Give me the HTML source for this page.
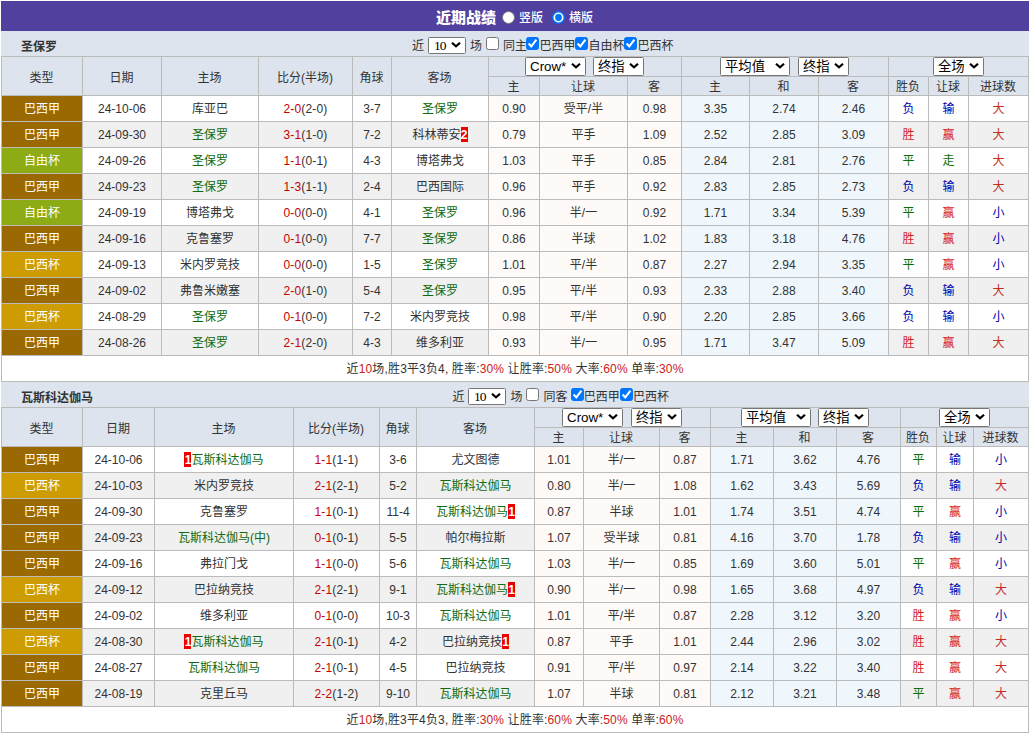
<!DOCTYPE html>
<html lang="zh-CN"><head><meta charset="utf-8"><title>近期战绩</title>
<style>
html,body{margin:0;padding:0;background:#fff;}
body{width:1030px;height:735px;overflow:hidden;position:relative;font-family:"Liberation Sans","Noto Sans CJK SC",sans-serif;font-size:12px;color:#333;}
#wrap{position:absolute;left:1px;top:1px;width:1028px;}
.title{height:30px;background:#51409e;color:#fff;font-size:12px;position:relative;}
.title span,.title b{position:absolute;white-space:nowrap;}
.title b{font-size:15px;left:435px;top:0;line-height:33px;font-weight:900;}
.title .rl{font-weight:500;top:0;line-height:35px;}
.bar{height:25px;background:#dde4ee;position:relative;}
.bar>span{position:absolute;white-space:nowrap;top:0;line-height:30px;}
.bar .tname{left:20px;font-weight:bold;color:#333;line-height:32px;}
.bar .sel{top:6px;height:17px;line-height:15px;}
.bar .cb{top:6px;}
table.grid{border-collapse:collapse;table-layout:fixed;width:1028px;}
table.grid th,table.grid td{border:1px solid #bbb;padding:0;text-align:center;font-weight:normal;overflow:hidden;white-space:nowrap;line-height:16px;}
tr.h1 th{height:35px;padding:3px 1px 0 0;background:#dde4ee;}
tr.h1 th[colspan]{height:19px;padding:0;line-height:19px;font-size:0;}
#t1 tr.h1 th.p1{padding-right:1px;}
tr.h2 th{height:16px;padding:2px 1px 0 0;background:#dde4ee;}
tbody td{height:25px;}
tr.ro td{background:#fff;}
tr.re td{background:#f0f0f0;}
tr.ro td.ah,tr.re td.ah{background:#fefaf7;}
tr.ro td.eu,tr.re td.eu{background:#eff7fc;}
td.lg{color:#fff;font-weight:500;padding-right:2px;}
tr td.l1{background:#9b6902;}
tr td.l2{background:#8dab14;}
tr td.l3{background:#cd9c02;}
.tg{color:#0f6b0f;}
.sr{color:#c40000;}
td.r{color:#d61c1c;}
tr.sum .r{color:#cc2020;}
.b{color:#00a;}
.gn{color:#0a6e0a;}
.bg{color:#c52d1c;}
td.tm{padding-right:4px;}
#t2 .w60{margin-left:-1px}#t2 .ml7{margin-left:8px}#t2 .ml{margin-left:7px}#t2 tr.h1 th.p2{padding-right:1px}
.rc{display:inline-block;background:#e00;color:#fff;font-weight:bold;width:7px;text-align:center;height:15px;line-height:17px;vertical-align:top;margin-top:0;}
tr.sum td{background:#fff;height:25px;letter-spacing:0.15px;}
.sel{display:inline-block;box-sizing:border-box;height:19px;border:1px solid #767676;border-radius:1.5px;background:#fff;color:#000;vertical-align:top;text-align:left;padding-left:4px;line-height:18px;position:relative;font-size:13.333px;}
.sel svg{position:absolute;right:4px;top:4px;}
.bar .sel svg{top:3px;}
.w60{width:61px}.w50{width:51px}.w69{width:70px}.w37{width:38px}
.ml{margin-left:8px}.ml7{margin-left:7px}
.s10{font-family:"Liberation Serif",serif;font-size:13.5px;letter-spacing:-1px;padding-left:5px;line-height:16px;}
.cb{display:inline-block;width:13px;height:13px;box-sizing:border-box;border:1px solid #767676;border-radius:2.5px;background:#fff;}
.cb.on{background:#0075ff;border-color:#0075ff;}
.cb svg{position:absolute;left:-1px;top:-1px;}
.rad{width:13px;height:13px;box-sizing:border-box;border-radius:50%;background:#fff;border:1px solid #767676;top:10px;}
.rad.on{border:0;background:none;}
.rad.on svg{position:absolute;left:0;top:0;}
td.sc{letter-spacing:0.15px;}
td.cn,td.b,td.r,td.gn,td.bg{padding-right:1px;}
</style></head><body><div id="wrap">

<div class="title"><b>近期战绩</b><span class="rad" style="left:501px"></span><span class="rl" style="left:518px">竖版</span><span class="rad on" style="left:551px"><svg width="13" height="13" viewBox="0 0 13 13"><circle cx="6.5" cy="6.5" r="5.75" fill="#fff" stroke="#0075ff" stroke-width="1.5"/><circle cx="6.5" cy="6.5" r="3.4" fill="#0075ff"/></svg></span><span class="rl" style="left:568px">横版</span></div>
<div class="bar" id="bar1"><span class="tname">圣保罗</span><span style="left:411px">近</span><span class="sel w37 s10" style="left:427px">10<svg width="10" height="8" viewBox="0 0 10 8"><path d="M1 1.7 L5 5.3 L9 1.7" stroke="#000" stroke-width="2.2" fill="none"/></svg></span><span style="left:469px">场</span><span class="cb" style="left:485px"></span><span style="left:502px">同主</span><span class="cb on" style="left:525px"><svg width="13" height="13" viewBox="0 0 13 13"><path d="M2.6 6.6 L5.3 9.4 L10.4 2.7" stroke="#fff" stroke-width="2.1" fill="none"/></svg></span><span style="left:538.6px">巴西甲</span><span class="cb on" style="left:574px"><svg width="13" height="13" viewBox="0 0 13 13"><path d="M2.6 6.6 L5.3 9.4 L10.4 2.7" stroke="#fff" stroke-width="2.1" fill="none"/></svg></span><span style="left:587.6px">自由杯</span><span class="cb on" style="left:623px"><svg width="13" height="13" viewBox="0 0 13 13"><path d="M2.6 6.6 L5.3 9.4 L10.4 2.7" stroke="#fff" stroke-width="2.1" fill="none"/></svg></span><span style="left:636.6px">巴西杯</span></div>
<table class="grid" id="t1">
<colgroup><col style="width:81px"><col style="width:79px"><col style="width:97px"><col style="width:94px"><col style="width:39px"><col style="width:97px"><col style="width:51px"><col style="width:88px"><col style="width:54px"><col style="width:68px"><col style="width:69px"><col style="width:70px"><col style="width:40px"><col style="width:40px"><col style="width:60px"></colgroup>
<thead>
<tr class="h1"><th rowspan="2">类型</th><th rowspan="2">日期</th><th rowspan="2">主场</th><th rowspan="2">比分(半场)</th><th rowspan="2">角球</th><th rowspan="2">客场</th><th colspan="3" class="p1"><span class="sel w60">Crow*<svg width="10" height="8" viewBox="0 0 10 8"><path d="M1 1.7 L5 5.3 L9 1.7" stroke="#000" stroke-width="2.2" fill="none"/></svg></span><span class="sel w50 ml7">终指<svg width="10" height="8" viewBox="0 0 10 8"><path d="M1 1.7 L5 5.3 L9 1.7" stroke="#000" stroke-width="2.2" fill="none"/></svg></span></th><th colspan="3" class="p1 p2"><span class="sel w69">平均值<svg width="10" height="8" viewBox="0 0 10 8"><path d="M1 1.7 L5 5.3 L9 1.7" stroke="#000" stroke-width="2.2" fill="none"/></svg></span><span class="sel w50 ml">终指<svg width="10" height="8" viewBox="0 0 10 8"><path d="M1 1.7 L5 5.3 L9 1.7" stroke="#000" stroke-width="2.2" fill="none"/></svg></span></th><th colspan="3"><span class="sel w50">全场<svg width="10" height="8" viewBox="0 0 10 8"><path d="M1 1.7 L5 5.3 L9 1.7" stroke="#000" stroke-width="2.2" fill="none"/></svg></span></th></tr>
<tr class="h2"><th>主</th><th>让球</th><th>客</th><th>主</th><th>和</th><th>客</th><th>胜负</th><th>让球</th><th>进球数</th></tr>
</thead><tbody>
<tr class="ro"><td class="lg l1">巴西甲</td><td>24-10-06</td><td class="tm"><span class="tn">库亚巴</span></td><td class="sc"><span class="sr">2-0</span>(2-0)</td><td>3-7</td><td class="tm"><span class="tg">圣保罗</span></td><td class="ah">0.90</td><td class="ah cn">受平/半</td><td class="ah">0.98</td><td class="eu">3.35</td><td class="eu">2.74</td><td class="eu">2.46</td><td class="b">负</td><td class="b">输</td><td class="bg">大</td></tr>
<tr class="re"><td class="lg l1">巴西甲</td><td>24-09-30</td><td class="tm"><span class="tg">圣保罗</span></td><td class="sc"><span class="sr">3-1</span>(1-0)</td><td>7-2</td><td class="tm"><span class="tn">科林蒂安</span><span class="rc">2</span></td><td class="ah">0.79</td><td class="ah cn">平手</td><td class="ah">1.09</td><td class="eu">2.52</td><td class="eu">2.85</td><td class="eu">3.09</td><td class="r">胜</td><td class="r">赢</td><td class="bg">大</td></tr>
<tr class="ro"><td class="lg l2">自由杯</td><td>24-09-26</td><td class="tm"><span class="tg">圣保罗</span></td><td class="sc"><span class="sr">1-1</span>(0-1)</td><td>4-3</td><td class="tm"><span class="tn">博塔弗戈</span></td><td class="ah">1.03</td><td class="ah cn">平手</td><td class="ah">0.85</td><td class="eu">2.84</td><td class="eu">2.81</td><td class="eu">2.76</td><td class="gn">平</td><td class="gn">走</td><td class="bg">大</td></tr>
<tr class="re"><td class="lg l1">巴西甲</td><td>24-09-23</td><td class="tm"><span class="tg">圣保罗</span></td><td class="sc"><span class="sr">1-3</span>(1-1)</td><td>2-4</td><td class="tm"><span class="tn">巴西国际</span></td><td class="ah">0.96</td><td class="ah cn">平手</td><td class="ah">0.92</td><td class="eu">2.83</td><td class="eu">2.85</td><td class="eu">2.73</td><td class="b">负</td><td class="b">输</td><td class="bg">大</td></tr>
<tr class="ro"><td class="lg l2">自由杯</td><td>24-09-19</td><td class="tm"><span class="tn">博塔弗戈</span></td><td class="sc"><span class="sr">0-0</span>(0-0)</td><td>4-1</td><td class="tm"><span class="tg">圣保罗</span></td><td class="ah">0.96</td><td class="ah cn">半/一</td><td class="ah">0.92</td><td class="eu">1.71</td><td class="eu">3.34</td><td class="eu">5.39</td><td class="gn">平</td><td class="r">赢</td><td class="b">小</td></tr>
<tr class="re"><td class="lg l1">巴西甲</td><td>24-09-16</td><td class="tm"><span class="tn">克鲁塞罗</span></td><td class="sc"><span class="sr">0-1</span>(0-0)</td><td>7-7</td><td class="tm"><span class="tg">圣保罗</span></td><td class="ah">0.86</td><td class="ah cn">半球</td><td class="ah">1.02</td><td class="eu">1.83</td><td class="eu">3.18</td><td class="eu">4.76</td><td class="r">胜</td><td class="r">赢</td><td class="b">小</td></tr>
<tr class="ro"><td class="lg l3">巴西杯</td><td>24-09-13</td><td class="tm"><span class="tn">米内罗竞技</span></td><td class="sc"><span class="sr">0-0</span>(0-0)</td><td>1-5</td><td class="tm"><span class="tg">圣保罗</span></td><td class="ah">1.01</td><td class="ah cn">平/半</td><td class="ah">0.87</td><td class="eu">2.27</td><td class="eu">2.94</td><td class="eu">3.35</td><td class="gn">平</td><td class="r">赢</td><td class="b">小</td></tr>
<tr class="re"><td class="lg l1">巴西甲</td><td>24-09-02</td><td class="tm"><span class="tn">弗鲁米嫩塞</span></td><td class="sc"><span class="sr">2-0</span>(1-0)</td><td>5-4</td><td class="tm"><span class="tg">圣保罗</span></td><td class="ah">0.95</td><td class="ah cn">平/半</td><td class="ah">0.93</td><td class="eu">2.33</td><td class="eu">2.88</td><td class="eu">3.40</td><td class="b">负</td><td class="b">输</td><td class="bg">大</td></tr>
<tr class="ro"><td class="lg l3">巴西杯</td><td>24-08-29</td><td class="tm"><span class="tg">圣保罗</span></td><td class="sc"><span class="sr">0-1</span>(0-0)</td><td>7-2</td><td class="tm"><span class="tn">米内罗竞技</span></td><td class="ah">0.98</td><td class="ah cn">平/半</td><td class="ah">0.90</td><td class="eu">2.20</td><td class="eu">2.85</td><td class="eu">3.66</td><td class="b">负</td><td class="b">输</td><td class="b">小</td></tr>
<tr class="re"><td class="lg l1">巴西甲</td><td>24-08-26</td><td class="tm"><span class="tg">圣保罗</span></td><td class="sc"><span class="sr">2-1</span>(2-0)</td><td>4-3</td><td class="tm"><span class="tn">维多利亚</span></td><td class="ah">0.93</td><td class="ah cn">半/一</td><td class="ah">0.95</td><td class="eu">1.71</td><td class="eu">3.47</td><td class="eu">5.09</td><td class="r">胜</td><td class="r">赢</td><td class="bg">大</td></tr>
<tr class="sum"><td colspan="15">近<span class="r">10</span>场,胜3平3负4, 胜率:<span class="r">30%</span> 让胜率:<span class="r">50%</span> 大率:<span class="r">60%</span> 单率:<span class="r">30%</span></td></tr>
</tbody></table>
<div class="bar" id="bar2"><span class="tname">瓦斯科达伽马</span><span style="left:451.6px">近</span><span class="sel w37 s10" style="left:467px">10<svg width="10" height="8" viewBox="0 0 10 8"><path d="M1 1.7 L5 5.3 L9 1.7" stroke="#000" stroke-width="2.2" fill="none"/></svg></span><span style="left:509.6px">场</span><span class="cb" style="left:525px"></span><span style="left:542.6px">同客</span><span class="cb on" style="left:570px"><svg width="13" height="13" viewBox="0 0 13 13"><path d="M2.6 6.6 L5.3 9.4 L10.4 2.7" stroke="#fff" stroke-width="2.1" fill="none"/></svg></span><span style="left:582.8px">巴西甲</span><span class="cb on" style="left:619px"><svg width="13" height="13" viewBox="0 0 13 13"><path d="M2.6 6.6 L5.3 9.4 L10.4 2.7" stroke="#fff" stroke-width="2.1" fill="none"/></svg></span><span style="left:632px">巴西杯</span></div>
<table class="grid" id="t2">
<colgroup><col style="width:81px"><col style="width:72px"><col style="width:139px"><col style="width:86px"><col style="width:37px"><col style="width:118px"><col style="width:49px"><col style="width:76px"><col style="width:51px"><col style="width:63px"><col style="width:63px"><col style="width:64px"><col style="width:36px"><col style="width:37px"><col style="width:55px"></colgroup>
<thead>
<tr class="h1"><th rowspan="2">类型</th><th rowspan="2">日期</th><th rowspan="2">主场</th><th rowspan="2">比分(半场)</th><th rowspan="2">角球</th><th rowspan="2">客场</th><th colspan="3" class="p1"><span class="sel w60">Crow*<svg width="10" height="8" viewBox="0 0 10 8"><path d="M1 1.7 L5 5.3 L9 1.7" stroke="#000" stroke-width="2.2" fill="none"/></svg></span><span class="sel w50 ml7">终指<svg width="10" height="8" viewBox="0 0 10 8"><path d="M1 1.7 L5 5.3 L9 1.7" stroke="#000" stroke-width="2.2" fill="none"/></svg></span></th><th colspan="3" class="p1 p2"><span class="sel w69">平均值<svg width="10" height="8" viewBox="0 0 10 8"><path d="M1 1.7 L5 5.3 L9 1.7" stroke="#000" stroke-width="2.2" fill="none"/></svg></span><span class="sel w50 ml">终指<svg width="10" height="8" viewBox="0 0 10 8"><path d="M1 1.7 L5 5.3 L9 1.7" stroke="#000" stroke-width="2.2" fill="none"/></svg></span></th><th colspan="3"><span class="sel w50">全场<svg width="10" height="8" viewBox="0 0 10 8"><path d="M1 1.7 L5 5.3 L9 1.7" stroke="#000" stroke-width="2.2" fill="none"/></svg></span></th></tr>
<tr class="h2"><th>主</th><th>让球</th><th>客</th><th>主</th><th>和</th><th>客</th><th>胜负</th><th>让球</th><th>进球数</th></tr>
</thead><tbody>
<tr class="ro"><td class="lg l1">巴西甲</td><td>24-10-06</td><td class="tm"><span class="rc">1</span><span class="tg">瓦斯科达伽马</span></td><td class="sc"><span class="sr">1-1</span>(1-1)</td><td>3-6</td><td class="tm"><span class="tn">尤文图德</span></td><td class="ah">1.01</td><td class="ah cn">半/一</td><td class="ah">0.87</td><td class="eu">1.71</td><td class="eu">3.62</td><td class="eu">4.76</td><td class="gn">平</td><td class="b">输</td><td class="b">小</td></tr>
<tr class="re"><td class="lg l3">巴西杯</td><td>24-10-03</td><td class="tm"><span class="tn">米内罗竞技</span></td><td class="sc"><span class="sr">2-1</span>(2-1)</td><td>5-2</td><td class="tm"><span class="tg">瓦斯科达伽马</span></td><td class="ah">0.80</td><td class="ah cn">半/一</td><td class="ah">1.08</td><td class="eu">1.62</td><td class="eu">3.43</td><td class="eu">5.69</td><td class="b">负</td><td class="b">输</td><td class="bg">大</td></tr>
<tr class="ro"><td class="lg l1">巴西甲</td><td>24-09-30</td><td class="tm"><span class="tn">克鲁塞罗</span></td><td class="sc"><span class="sr">1-1</span>(0-1)</td><td>11-4</td><td class="tm"><span class="tg">瓦斯科达伽马</span><span class="rc">1</span></td><td class="ah">0.87</td><td class="ah cn">半球</td><td class="ah">1.01</td><td class="eu">1.74</td><td class="eu">3.51</td><td class="eu">4.74</td><td class="gn">平</td><td class="r">赢</td><td class="b">小</td></tr>
<tr class="re"><td class="lg l1">巴西甲</td><td>24-09-23</td><td class="tm"><span class="tg">瓦斯科达伽马(中)</span></td><td class="sc"><span class="sr">0-1</span>(0-1)</td><td>5-5</td><td class="tm"><span class="tn">帕尔梅拉斯</span></td><td class="ah">1.07</td><td class="ah cn">受半球</td><td class="ah">0.81</td><td class="eu">4.16</td><td class="eu">3.70</td><td class="eu">1.78</td><td class="b">负</td><td class="b">输</td><td class="b">小</td></tr>
<tr class="ro"><td class="lg l1">巴西甲</td><td>24-09-16</td><td class="tm"><span class="tn">弗拉门戈</span></td><td class="sc"><span class="sr">1-1</span>(0-0)</td><td>5-6</td><td class="tm"><span class="tg">瓦斯科达伽马</span></td><td class="ah">1.03</td><td class="ah cn">半/一</td><td class="ah">0.85</td><td class="eu">1.69</td><td class="eu">3.60</td><td class="eu">5.01</td><td class="gn">平</td><td class="r">赢</td><td class="b">小</td></tr>
<tr class="re"><td class="lg l3">巴西杯</td><td>24-09-12</td><td class="tm"><span class="tn">巴拉纳竞技</span></td><td class="sc"><span class="sr">2-1</span>(2-1)</td><td>9-1</td><td class="tm"><span class="tg">瓦斯科达伽马</span><span class="rc">1</span></td><td class="ah">0.90</td><td class="ah cn">半/一</td><td class="ah">0.98</td><td class="eu">1.65</td><td class="eu">3.68</td><td class="eu">4.97</td><td class="b">负</td><td class="b">输</td><td class="bg">大</td></tr>
<tr class="ro"><td class="lg l1">巴西甲</td><td>24-09-02</td><td class="tm"><span class="tn">维多利亚</span></td><td class="sc"><span class="sr">0-1</span>(0-0)</td><td>10-3</td><td class="tm"><span class="tg">瓦斯科达伽马</span></td><td class="ah">1.01</td><td class="ah cn">平/半</td><td class="ah">0.87</td><td class="eu">2.28</td><td class="eu">3.12</td><td class="eu">3.20</td><td class="r">胜</td><td class="r">赢</td><td class="b">小</td></tr>
<tr class="re"><td class="lg l3">巴西杯</td><td>24-08-30</td><td class="tm"><span class="rc">1</span><span class="tg">瓦斯科达伽马</span></td><td class="sc"><span class="sr">2-1</span>(0-1)</td><td>4-2</td><td class="tm"><span class="tn">巴拉纳竞技</span><span class="rc">1</span></td><td class="ah">0.87</td><td class="ah cn">平手</td><td class="ah">1.01</td><td class="eu">2.44</td><td class="eu">2.96</td><td class="eu">3.02</td><td class="r">胜</td><td class="r">赢</td><td class="bg">大</td></tr>
<tr class="ro"><td class="lg l1">巴西甲</td><td>24-08-27</td><td class="tm"><span class="tg">瓦斯科达伽马</span></td><td class="sc"><span class="sr">2-1</span>(0-1)</td><td>4-5</td><td class="tm"><span class="tn">巴拉纳竞技</span></td><td class="ah">0.91</td><td class="ah cn">平/半</td><td class="ah">0.97</td><td class="eu">2.14</td><td class="eu">3.22</td><td class="eu">3.40</td><td class="r">胜</td><td class="r">赢</td><td class="bg">大</td></tr>
<tr class="re"><td class="lg l1">巴西甲</td><td>24-08-19</td><td class="tm"><span class="tn">克里丘马</span></td><td class="sc"><span class="sr">2-2</span>(1-2)</td><td>9-10</td><td class="tm"><span class="tg">瓦斯科达伽马</span></td><td class="ah">1.07</td><td class="ah cn">半球</td><td class="ah">0.81</td><td class="eu">2.12</td><td class="eu">3.21</td><td class="eu">3.48</td><td class="gn">平</td><td class="r">赢</td><td class="bg">大</td></tr>
<tr class="sum"><td colspan="15">近<span class="r">10</span>场,胜3平4负3, 胜率:<span class="r">30%</span> 让胜率:<span class="r">60%</span> 大率:<span class="r">50%</span> 单率:<span class="r">60%</span></td></tr>
</tbody></table>
</div></body></html>
